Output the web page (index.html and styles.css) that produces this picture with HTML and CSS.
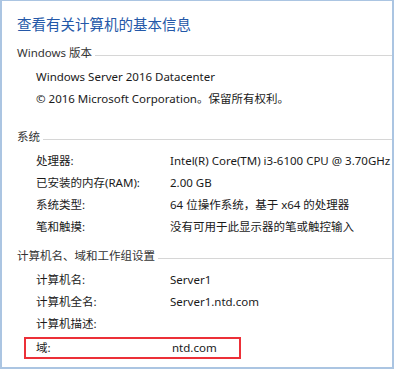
FILE: index.html
```html
<!DOCTYPE html>
<html lang="zh-CN">
<head>
  <meta charset="UTF-8" />
  <title>系统</title>
  <link rel="stylesheet" href="styles.css">
</head>
<body>
  <div class="window">
    <h1 class="title">查看有关计算机的基本信息</h1>

    <!-- Windows 版本 -->
    <section class="group group-edition">
      <h2 class="group-head">Windows 版本</h2>
      <div class="row"><span class="text">Windows Server 2016 Datacenter</span></div>
      <div class="row"><span class="text">© 2016 Microsoft Corporation。保留所有权利。</span></div>
    </section>

    <!-- 系统 -->
    <section class="group">
      <h2 class="group-head">系统</h2>
      <div class="row"><span class="label">处理器:</span><span class="value">Intel(R) Core(TM) i3-6100 CPU @ 3.70GHz</span></div>
      <div class="row"><span class="label">已安装的内存(RAM):</span><span class="value">2.00 GB</span></div>
      <div class="row"><span class="label">系统类型:</span><span class="value">64 位操作系统，基于 x64 的处理器</span></div>
      <div class="row"><span class="label">笔和触摸:</span><span class="value">没有可用于此显示器的笔或触控输入</span></div>
    </section>

    <!-- 计算机名、域和工作组设置 -->
    <section class="group">
      <h2 class="group-head">计算机名、域和工作组设置</h2>
      <div class="row"><span class="label">计算机名:</span><span class="value">Server1</span></div>
      <div class="row"><span class="label">计算机全名:</span><span class="value">Server1.ntd.com</span></div>
      <div class="row"><span class="label">计算机描述:</span><span class="value"></span></div>
      <div class="row row-marked"><span class="label">域:</span><span class="value">ntd.com</span></div>
    </section>
  </div>
</body>
</html>
```

FILE: styles.css
```css
* {
  margin: 0;
  padding: 0;
  box-sizing: border-box;
}

body {
  font-family: "Noto Sans", "Noto Sans CJK SC", sans-serif;
  font-size: 11.5px;
  color: #1a1a1a;
  background: #fff;
}

.window {
  width: 394px;
  height: 369px;
  border: 2px solid #abc5e2;
  border-top-width: 1px;
  padding: 12px 0 0 15px;
  overflow: hidden;
}

.title {
  font-size: 14.5px;
  font-weight: normal;
  line-height: 22px;
  color: #2458a8;
  margin-bottom: 7px;
}

.group {
  margin-bottom: 7px;
}

.group-edition {
  margin-bottom: 16px;
}

.group-head {
  display: flex;
  align-items: center;
  gap: 3px;
  font-size: 11.5px;
  font-weight: normal;
  line-height: 22px;
  color: #333;
  margin-bottom: 2px;
}

.group-head::after {
  content: "";
  flex: 1;
  height: 1px;
  margin-top: 4px;
  background: #d6d6d6;
}

.row {
  display: flex;
  height: 22px;
  line-height: 22px;
  padding-left: 19px;
  white-space: nowrap;
}

.label {
  width: 134px;
}

.row-marked {
  width: 217px;
  height: 22px;
  line-height: 18px;
  margin-left: 7px;
  margin-top: 2px;
  padding-left: 10px;
  border: 2px solid #ec3038;
}

.row-marked .label {
  width: 136px;
}
```
